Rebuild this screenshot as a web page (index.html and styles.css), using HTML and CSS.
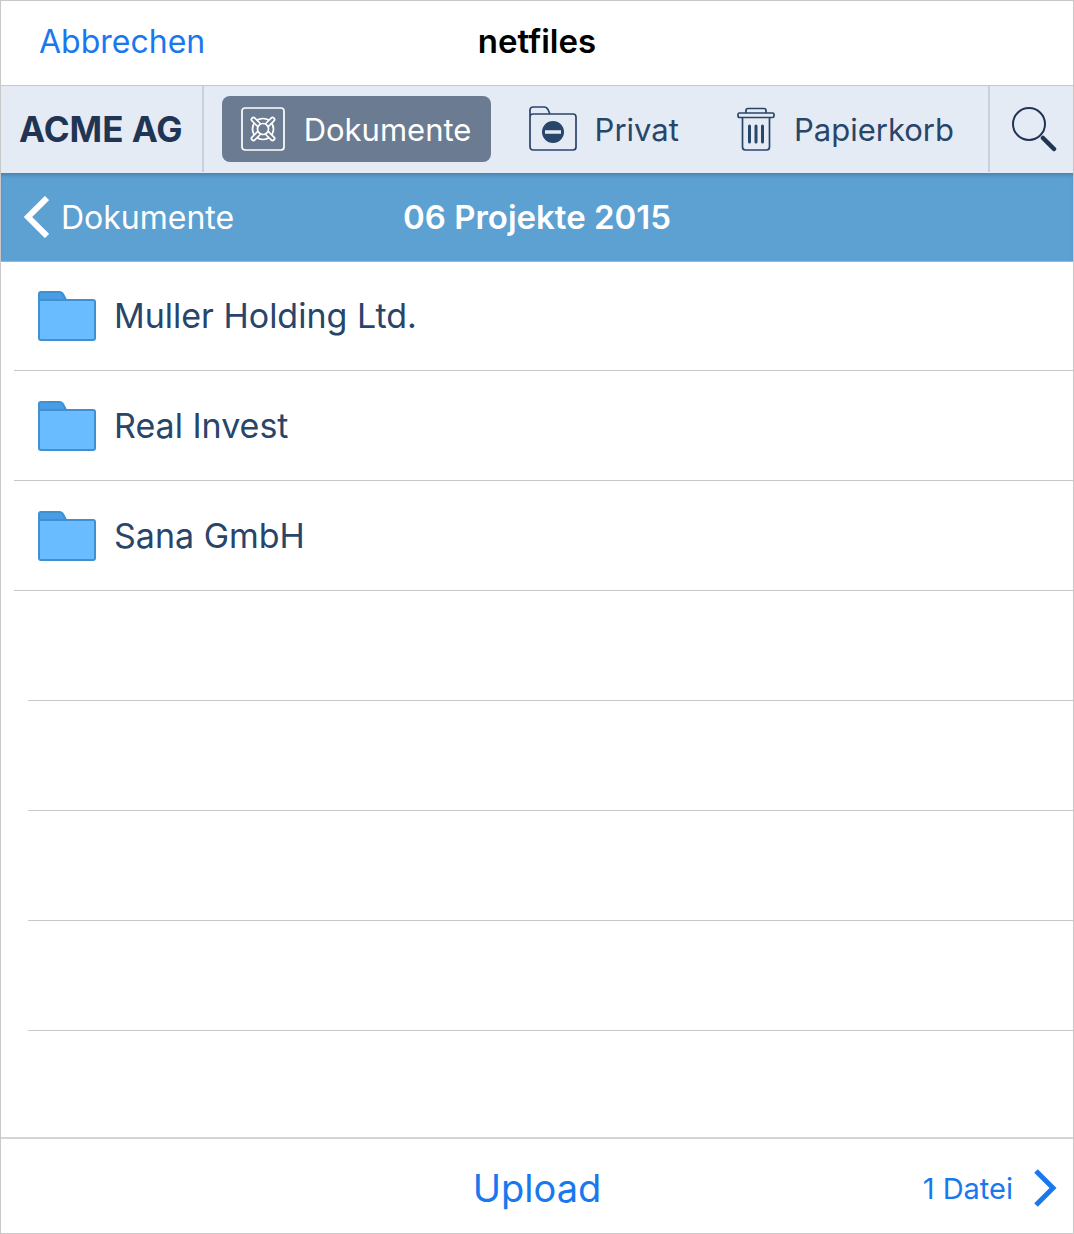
FILE: index.html
```html
<!DOCTYPE html>
<html lang="de">
<head>
    <meta charset="UTF-8">
    <meta name="viewport" content="width=device-width, initial-scale=1.0">
    <title>netfiles</title>
    <link rel="stylesheet" href="styles.css">
</head>
<body>
    <svg class="defs" width="0" height="0">
        <symbol id="folder" viewBox="1 1 58 50">
            <path d="M2 13V4a2 2 0 0 1 2-2h18.500c2 0 3 1 4 3l2.500 5v3z" fill="#479ee6"/>
            <path d="M2 10h54a2 2 0 0 1 2 2v36a2 2 0 0 1-2 2H4a2 2 0 0 1-2-2z" fill="#68bcff"/>
            <path d="M2 10V4a2 2 0 0 1 2-2h18.500c2 0 3 1 4 3l2.500 5h27a2 2 0 0 1 2 2v36a2 2 0 0 1-2 2H4a2 2 0 0 1-2-2V10h27" fill="none" stroke="#4090cf" stroke-width="2"/>
        </symbol>
    </svg>

    <header class="titlebar">
        <button class="cancel">Abbrechen</button>
        <h1>netfiles</h1>
    </header>

    <div class="toolbar">
        <strong class="company">ACME AG</strong>
        <nav class="tabs">
            <a class="tab active" href="#dokumente">
                <svg width="46" height="46" viewBox="0 0 46 46" fill="none" stroke="#fff" stroke-width="1.700">
                    <rect x="2" y="2" width="42" height="42" rx="3"/>
                    <circle cx="23" cy="23" r="10.500"/>
                    <g fill="#6b7b91">
                        <rect x="21" y="7.500" width="4" height="11" rx="2" transform="rotate(45 23 23)"/>
                        <rect x="21" y="7.500" width="4" height="11" rx="2" transform="rotate(135 23 23)"/>
                        <rect x="21" y="7.500" width="4" height="11" rx="2" transform="rotate(225 23 23)"/>
                        <rect x="21" y="7.500" width="4" height="11" rx="2" transform="rotate(315 23 23)"/>
                        <circle cx="23" cy="23" r="5.500"/>
                    </g>
                </svg>
                Dokumente
            </a>
            <a class="tab" href="#privat">
                <svg width="48" height="46" viewBox="0 0 48 46" fill="none" stroke="#28456a" stroke-width="1.700">
                    <path d="M1 11V4a3 3 0 0 1 3-3H15c2 0 3 .5 4 2.500L21 8h23a3 3 0 0 1 3 3v30a3 3 0 0 1-3 3H4a3 3 0 0 1-3-3V11a3 3 0 0 1 3-3H21"/>
                    <circle cx="24" cy="26" r="11" fill="#28456a" stroke="none"/>
                    <path d="M16 26h16" stroke="#e5ebf4" stroke-width="3.500"/>
                </svg>
                Privat
            </a>
            <a class="tab" href="#papierkorb">
                <svg width="40" height="46" viewBox="0 0 40 46" fill="none" stroke="#28456a" stroke-width="1.700">
                    <path d="M10 7V4.500a2 2 0 0 1 2-2h16a2 2 0 0 1 2 2V7"/>
                    <rect x="2" y="7" width="36" height="4.500" rx="1.500"/>
                    <path d="M6.500 12v29a3 3 0 0 0 3 3h21a3 3 0 0 0 3-3V12"/>
                    <path d="M13.500 20v16M20 20v16M26.500 20v16" stroke-width="3" stroke-linecap="round"/>
                </svg>
                Papierkorb
            </a>
        </nav>
        <button class="search" aria-label="Suchen">
            <svg width="46" height="46" viewBox="0 0 46 46" fill="none" stroke="#1f3553">
                <circle cx="18" cy="18" r="16" stroke-width="2"/>
                <path d="M32 32l11 11" stroke-width="4.500" stroke-linecap="round"/>
            </svg>
        </button>
    </div>

    <div class="pathbar">
        <a class="back" href="#dokumente">
            <svg width="26" height="42" viewBox="0 0 26 42" fill="none" stroke="#fff" stroke-width="6">
                <path d="M24 2L5 21l19 19"/>
            </svg>
            Dokumente
        </a>
        <h2>06 Projekte 2015</h2>
    </div>

    <main>
        <ul class="files">
            <li><a href="#muller"><svg width="58" height="50"><use href="#folder"/></svg>Muller Holding Ltd.</a></li>
            <li><a href="#real"><svg width="58" height="50"><use href="#folder"/></svg>Real Invest</a></li>
            <li><a href="#sana"><svg width="58" height="50"><use href="#folder"/></svg>Sana GmbH</a></li>
            <li class="empty"></li>
            <li class="empty"></li>
            <li class="empty"></li>
            <li class="empty"></li>
        </ul>
    </main>

    <footer class="bottombar">
        <button class="upload">Upload</button>
        <button class="count">
            1 Datei
            <svg width="24" height="38" viewBox="0 0 24 38" fill="none" stroke="#1a78ee" stroke-width="5">
                <path d="M3 2l17 17L3 36"/>
            </svg>
        </button>
    </footer>
</body>
</html>
```
FILE: styles.css
```css
* {
    box-sizing: border-box;
}
body {
    margin: 0;
    min-height: 100vh;
    display: flex;
    flex-direction: column;
    border: 1px solid #c8c8c8;
    background: white;
    color: #28456a;
    font-family: Inter, "Liberation Sans", sans-serif;
    font-size: 32px;
}
h1, h2, ul {
    margin: 0;
    padding: 0;
}
button {
    padding: 0;
    border: none;
    background: none;
    color: #1a78ee;
    font: inherit;
    cursor: pointer;
}
a {
    color: inherit;
    text-decoration: none;
}
svg {
    flex: none;
}
.defs {
    position: absolute;
}

/* title bar */
.titlebar, .pathbar, .bottombar {
    display: grid;
    grid-template-columns: 1fr auto 1fr;
    align-items: center;
}
.titlebar {
    height: 85px;
    padding: 0 38px 4px;
    border-bottom: 1px solid #c8c8cc;
}
.titlebar h1 {
    color: black;
    font-size: 33px;
    font-weight: 600;
}
.cancel {
    justify-self: start;
}

/* tabs */
.toolbar {
    display: flex;
    height: 87px;
    padding-bottom: 1px;
    background: #e5ebf4;
    font-size: 31px;
}
.company {
    display: flex;
    align-items: center;
    padding: 0 19px 0 18px;
    border-right: 2px solid #c9d1e0;
    color: #1f3553;
    font-size: 35px;
}
.tabs {
    flex: 1;
    display: flex;
    align-items: center;
    justify-content: space-between;
    padding: 0 14px 0 18px;
}
.tab {
    display: flex;
    align-items: center;
    gap: 18px;
    height: 66px;
    padding: 0 20px 0 18px;
    border-radius: 8px;
}
.tab.active {
    background: #6b7b91;
    color: white;
}
.search {
    display: flex;
    align-items: center;
    padding: 0 16px 0 21px;
    border-left: 2px solid #c9d1e0;
}

/* current folder, its bottom line lies on the first row */
.pathbar {
    height: 89px;
    margin-bottom: -1px;
    padding: 0 22px;
    border-bottom: 1px solid #9fb4c8;
    background: #5da1d3;
    box-shadow: inset 0 4px 4px -2px #4a7fa9;
    color: white;
}
.pathbar h2 {
    font-size: 33px;
    font-weight: 600;
}
.back {
    display: flex;
    align-items: center;
    gap: 12px;
}

main {
    flex: 1;
}
.files {
    list-style: none;
    font-size: 34px;
}
.files li {
    height: 110px;
    margin-left: 13px;
    border-bottom: 1px solid #c8c8cc;
}
.files li.empty {
    margin-left: 27px;
}
.files a {
    display: flex;
    align-items: center;
    gap: 18px;
    height: 100%;
    padding-left: 24px;
}

.bottombar {
    height: 96px;
    padding: 4px 16px 0;
    border-top: 2px solid #d4d4d4;
}
.upload {
    grid-column: 2;
    font-size: 38px;
}
.count {
    justify-self: end;
    display: flex;
    align-items: center;
    gap: 20px;
    font-size: 29px;
}
```
